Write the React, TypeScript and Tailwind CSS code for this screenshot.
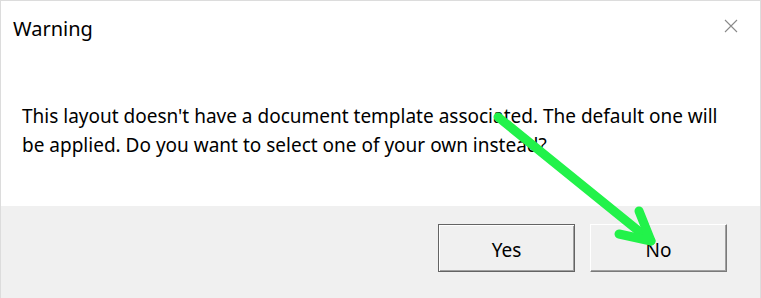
export default function App() {
  return (
    <div
      className="relative w-[761px] h-[298px] bg-white border-l border-t border-r border-[#dcdcdc] flex flex-col text-black"
      style={{ fontFamily: '"Segoe UI", "Noto Sans", sans-serif' }}
    >
      <div className="flex items-start justify-between h-[56px] pl-[12px] pr-[22px]">
        <span className="text-[20px] leading-[26px] mt-[15px]">Warning</span>
        <svg className="mt-[18px]" width="14" height="14" viewBox="0 0 14 14">
          <path d="M1 1L13 13M13 1L1 13" stroke="#8a8a8a" strokeWidth="1.1" />
        </svg>
      </div>

      <div className="flex-1 pl-[21px] pr-[36px] pt-[45px]">
        <p className="text-[19px] leading-[29px]">
          This layout doesn't have a document template associated. The default one will be applied.
          Do you want to select one of your own instead?
        </p>
      </div>

      <div className="h-[92px] bg-[#f0f0f0] flex justify-end items-start gap-[15px] pt-[18px] pr-[33px]">
        <button className="w-[137px] h-[48px] pt-[4px] bg-[#f0f0f0] border border-[#646464] shadow-[inset_1px_1px_0_#ffffff,inset_-1px_-1px_0_#a0a0a0] text-[19px]">
          Yes
        </button>
        <button className="w-[137px] h-[48px] pt-[4px] bg-[#f0f0f0] border border-t-white border-l-white border-r-[#7a7a7a] border-b-[#7a7a7a] shadow-[inset_-1px_-1px_0_#a0a0a0] text-[19px]">
          No
        </button>
      </div>

      <svg
        className="absolute left-0 top-0 pointer-events-none"
        width="761"
        height="298"
        viewBox="0 0 761 298"
      >
        <g stroke="#22f24a" strokeWidth="9" strokeLinecap="round" strokeLinejoin="round" fill="none">
          <path d="M497 116L650 240" />
          <path d="M618 233L650 240L638 210" />
        </g>
      </svg>
    </div>
  );
}
